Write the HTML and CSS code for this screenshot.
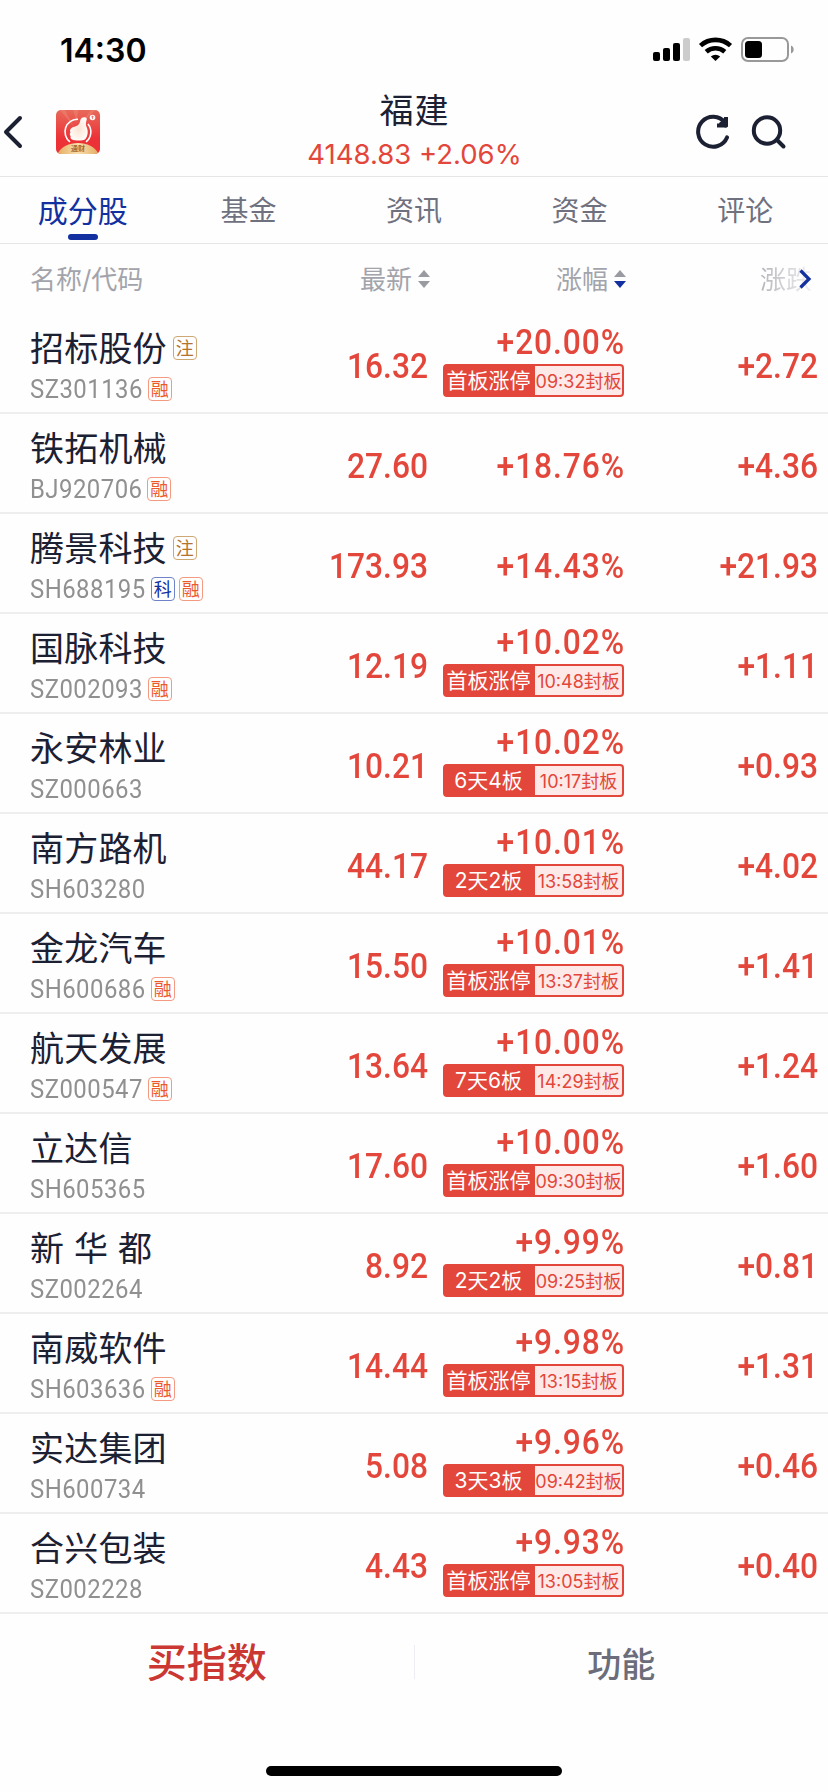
FILE: index.html
```html
<!DOCTYPE html>
<html lang="zh-CN">
<head>
  <meta charset="UTF-8">
  <meta name="viewport" content="width=device-width, initial-scale=1.0">
  <title>福建</title>
  <link rel="stylesheet" href="styles.css">
</head>
<body>
  <div class="status-bar">
    <span class="clock">14:30</span>
    <svg class="status-icons" width="144" height="28" viewBox="0 0 144 28">
      <rect x="1" y="16" width="7" height="9" rx="2"/>
      <rect x="11" y="12" width="7" height="13" rx="2"/>
      <rect x="21" y="7" width="7" height="18" rx="2"/>
      <rect x="31" y="2" width="7" height="23" rx="2" fill="#ccc"/>
      <g fill="none" stroke="#000" stroke-width="4.6">
        <path d="M48.5 9.6a22.5 22.5 0 0 1 30 0"/>
        <path d="M54.2 15.8a14 14 0 0 1 18.6 0"/>
      </g>
      <path d="M58.8 20.6a7.2 7.2 0 0 1 9.4 0L63.5 25z"/>
      <rect x="90" y="2" width="46" height="23" rx="6" fill="none" stroke="#999" stroke-width="2"/>
      <rect x="93" y="5" width="17" height="17" rx="3.5"/>
      <path d="M139 9.5c3.600 1.200 3.600 6.800 0 8z" fill="#999"/>
    </svg>
  </div>

  <header class="nav">
    <svg class="back" width="24" height="36" viewBox="0 0 24 36"><path d="M20 4L6 18l14 14"/></svg>
    <svg class="app-logo" width="44" height="44" viewBox="0 0 44 44">
      <defs>
        <clipPath id="logo-clip"><rect width="44" height="44" rx="5"/></clipPath>
        <linearGradient id="logo-bg" x1="0" y1="0" x2="0" y2="1">
          <stop offset="0" stop-color="#e8695a"/>
          <stop offset=".65" stop-color="#ec3236"/>
        </linearGradient>
        <radialGradient id="logo-hand">
          <stop offset="0" stop-color="#fbe3d3"/>
          <stop offset="1" stop-color="#fffaf6"/>
        </radialGradient>
        <linearGradient id="logo-gold">
          <stop offset="0" stop-color="#e3ac62"/>
          <stop offset=".5" stop-color="#f9dfac"/>
          <stop offset="1" stop-color="#e3ac62"/>
        </linearGradient>
      </defs>
      <g clip-path="url(#logo-clip)">
        <rect width="44" height="44" fill="url(#logo-bg)"/>
        <path d="M4 0l14 17L9 0zM17 0l4 12 1-12zM35 0l-9 12L40 0z" fill="#f29a80" opacity=".35"/>
        <path d="M22 9.300a12.500 12.500 0 0 0-8 22.500M32 14a12.500 12.500 0 0 1-2 17.800" fill="none" stroke="#fff" stroke-width="1.600"/>
        <path d="M15 18.500c1-1.800 6-1.500 8-4.500C25 11.500 23.500 8 27 7.400c3-.6 4.500.4 3.500 3.200-1 3-.8 4.800.3 7 1.700 4 1 8.500-1.300 11.400-2 2-11 1.800-13.500.5-1.800-1-1.600-2.300-1.300-3.500-1.200-1-1.100-2.600-.2-3.600-.8-1.200-.6-2.800.5-3.900z" fill="url(#logo-hand)"/>
        <circle cx="36.500" cy="7.500" r="2.800" fill="#fff"/>
        <path d="M36.500 9.200V6M35.200 7.200l1.300-1.300 1.300 1.300" fill="none" stroke="#e8695a" stroke-width=".8"/>
        <path d="M1 45C7 29 37 29 43 45z" fill="url(#logo-gold)"/>
        <text class="logo-text" x="22" y="41" text-anchor="middle">通财</text>
      </g>
    </svg>
    <div class="title">
      <h1>福建</h1>
      <p>4148.83 +2.06%</p>
    </div>
    <svg class="nav-icon" width="36" height="36" viewBox="0 0 36 36">
      <path d="M33 23.400A15 15 0 1 1 31 8.500"/>
      <path d="M32 3v8.500h-9" stroke-linecap="butt"/>
      <path d="M27 10l5-3.500v5z"/>
    </svg>
    <svg class="nav-icon search" width="36" height="36" viewBox="0 0 36 36">
      <circle cx="16" cy="16.500" r="13.200"/>
      <path d="M26 26l6.500 6.500"/>
    </svg>
  </header>

  <nav class="tabs">
    <a class="tab active">成分股</a>
    <a class="tab">基金</a>
    <a class="tab">资讯</a>
    <a class="tab">资金</a>
    <a class="tab">评论</a>
  </nav>

  <div class="thead">
    <span class="th-name">名称/代码</span>
    <span class="th">最新<i class="sort"></i></span>
    <span class="th">涨幅<i class="sort desc"></i></span>
    <span class="th-more"><span class="fade">涨跌</span><svg width="14" height="22" viewBox="0 0 14 22"><path d="M2.500 2.500L11 11l-8.500 8.500"/></svg></span>
  </div>

  <main class="stocks">
    <div class="row">
      <div class="stock"><div class="name">招标股份<b class="tag zhu">注</b></div><div class="code"><span>SZ301136</span><b class="tag rong">融</b></div></div>
      <div class="num">16.32</div>
      <div class="pct"><div class="num">+20.00%</div><div class="limit"><b>首板涨停</b><i>09:32封板</i></div></div>
      <div class="num">+2.72</div>
    </div>
    <div class="row">
      <div class="stock"><div class="name">铁拓机械</div><div class="code"><span>BJ920706</span><b class="tag rong">融</b></div></div>
      <div class="num">27.60</div>
      <div class="pct"><div class="num">+18.76%</div></div>
      <div class="num">+4.36</div>
    </div>
    <div class="row">
      <div class="stock"><div class="name">腾景科技<b class="tag zhu">注</b></div><div class="code"><span>SH688195</span><b class="tag ke">科</b><b class="tag rong">融</b></div></div>
      <div class="num">173.93</div>
      <div class="pct"><div class="num">+14.43%</div></div>
      <div class="num">+21.93</div>
    </div>
    <div class="row">
      <div class="stock"><div class="name">国脉科技</div><div class="code"><span>SZ002093</span><b class="tag rong">融</b></div></div>
      <div class="num">12.19</div>
      <div class="pct"><div class="num">+10.02%</div><div class="limit"><b>首板涨停</b><i>10:48封板</i></div></div>
      <div class="num">+1.11</div>
    </div>
    <div class="row">
      <div class="stock"><div class="name">永安林业</div><div class="code"><span>SZ000663</span></div></div>
      <div class="num">10.21</div>
      <div class="pct"><div class="num">+10.02%</div><div class="limit"><b>6天4板</b><i>10:17封板</i></div></div>
      <div class="num">+0.93</div>
    </div>
    <div class="row">
      <div class="stock"><div class="name">南方路机</div><div class="code"><span>SH603280</span></div></div>
      <div class="num">44.17</div>
      <div class="pct"><div class="num">+10.01%</div><div class="limit"><b>2天2板</b><i>13:58封板</i></div></div>
      <div class="num">+4.02</div>
    </div>
    <div class="row">
      <div class="stock"><div class="name">金龙汽车</div><div class="code"><span>SH600686</span><b class="tag rong">融</b></div></div>
      <div class="num">15.50</div>
      <div class="pct"><div class="num">+10.01%</div><div class="limit"><b>首板涨停</b><i>13:37封板</i></div></div>
      <div class="num">+1.41</div>
    </div>
    <div class="row">
      <div class="stock"><div class="name">航天发展</div><div class="code"><span>SZ000547</span><b class="tag rong">融</b></div></div>
      <div class="num">13.64</div>
      <div class="pct"><div class="num">+10.00%</div><div class="limit"><b>7天6板</b><i>14:29封板</i></div></div>
      <div class="num">+1.24</div>
    </div>
    <div class="row">
      <div class="stock"><div class="name">立达信</div><div class="code"><span>SH605365</span></div></div>
      <div class="num">17.60</div>
      <div class="pct"><div class="num">+10.00%</div><div class="limit"><b>首板涨停</b><i>09:30封板</i></div></div>
      <div class="num">+1.60</div>
    </div>
    <div class="row">
      <div class="stock"><div class="name">新 华 都</div><div class="code"><span>SZ002264</span></div></div>
      <div class="num">8.92</div>
      <div class="pct"><div class="num">+9.99%</div><div class="limit"><b>2天2板</b><i>09:25封板</i></div></div>
      <div class="num">+0.81</div>
    </div>
    <div class="row">
      <div class="stock"><div class="name">南威软件</div><div class="code"><span>SH603636</span><b class="tag rong">融</b></div></div>
      <div class="num">14.44</div>
      <div class="pct"><div class="num">+9.98%</div><div class="limit"><b>首板涨停</b><i>13:15封板</i></div></div>
      <div class="num">+1.31</div>
    </div>
    <div class="row">
      <div class="stock"><div class="name">实达集团</div><div class="code"><span>SH600734</span></div></div>
      <div class="num">5.08</div>
      <div class="pct"><div class="num">+9.96%</div><div class="limit"><b>3天3板</b><i>09:42封板</i></div></div>
      <div class="num">+0.46</div>
    </div>
    <div class="row">
      <div class="stock"><div class="name">合兴包装</div><div class="code"><span>SZ002228</span></div></div>
      <div class="num">4.43</div>
      <div class="pct"><div class="num">+9.93%</div><div class="limit"><b>首板涨停</b><i>13:05封板</i></div></div>
      <div class="num">+0.40</div>
    </div>
  </main>

  <footer class="bottom-bar">
    <a class="buy">买指数</a>
    <a class="more">功能</a>
  </footer>
  <div class="home-indicator"></div>
</body>
</html>
```
FILE: styles.css
```css
* {
  box-sizing: border-box;
}
body {
  margin: 0;
  width: 828px;
  height: 1792px;
  overflow: hidden;
  display: flex;
  flex-direction: column;
  background: #fefefe;
  color: #1c2033;
  font-family: Inter, "Noto Sans CJK SC", sans-serif;
}
h1, p {
  margin: 0;
}
b, i {
  font-weight: 400;
  font-style: normal;
}

/* status bar */
.status-bar {
  height: 88px;
  padding: 12px 32px 0 60px;
  display: flex;
  align-items: center;
  justify-content: space-between;
}
.clock {
  font-size: 32px;
  font-weight: 600;
  color: #000;
}

/* title bar */
.nav {
  height: 89px;
  padding: 0 41px 0 0;
  display: flex;
  align-items: center;
  border-bottom: 1px solid #e6e6e6;
}
.back, .nav-icon {
  fill: none;
  stroke: #1c2033;
  stroke-width: 4;
  stroke-linecap: round;
  stroke-linejoin: round;
}
.app-logo {
  margin-left: 32px;
}
.logo-text {
  font-size: 7px;
  font-weight: 700;
  fill: #a5692f;
}
.title {
  flex: 1;
  padding-left: 35px;
  text-align: center;
}
.title h1 {
  font-size: 34px;
  line-height: 44px;
  font-weight: 400;
  letter-spacing: 1px;
}
.title p {
  font-size: 27.5px;
  line-height: 42px;
  color: #e3463a;
}
.search {
  margin-left: 21px;
}

/* tabs */
.tabs {
  height: 67px;
  display: flex;
  border-bottom: 1px solid #e6e6e6;
}
.tab {
  flex: 1;
  display: flex;
  flex-direction: column;
  align-items: center;
  font-size: 28px;
  line-height: 68px;
  color: #6f717e;
}
.tab.active {
  font-size: 30px;
  color: #1230a0;
}
.tab.active::after {
  content: "";
  width: 30px;
  height: 6px;
  margin-top: -11px;
  border-radius: 3px;
  background: #1230a0;
}

/* table */
.thead, .row {
  display: grid;
  grid-template-columns: 248px 150px 196px 194px;
  padding-left: 30px;
  align-items: center;
}
.thead {
  height: 70px;
  padding-bottom: 3px;
  font-size: 26px;
  color: #a3a4ab;
}
.th {
  display: flex;
  align-items: center;
  justify-content: flex-end;
}
.thead .th {
  margin-right: -2px;
}
.sort {
  margin: 3px 0 0 6px;
  display: flex;
  flex-direction: column;
  gap: 4px;
}
.sort::before, .sort::after {
  content: "";
  border: 6px solid transparent;
  border-top-width: 0;
  border-bottom: 7px solid #9a9ba2;
}
.sort::after {
  border-top: 7px solid #9a9ba2;
  border-bottom-width: 0;
}
.sort.desc::after {
  border-top-color: #1230a0;
}
.th-more {
  display: flex;
  align-items: center;
  justify-content: flex-end;
  padding-right: 6px;
}
.fade {
  margin-right: -14px;
  background: linear-gradient(90deg, #b4b5bb, #d8d8dc 60%, #f2f2f4);
  -webkit-background-clip: text;
  background-clip: text;
  color: transparent;
}
.th-more svg {
  margin-top: 3px;
  fill: none;
  stroke: #1230a0;
  stroke-width: 3.2;
}
.row {
  height: 100px;
  border-bottom: 2px solid #eee;
}
.stock {
  padding-top: 5px;
}
.name {
  height: 44px;
  display: flex;
  align-items: center;
  font-size: 34px;
  letter-spacing: .2px;
  white-space: pre;
}
.code {
  height: 36px;
  margin-top: 2px;
  display: flex;
  align-items: center;
  font: 26px Roboto, sans-serif;
  color: #909090;
}
.code > span {
  transform: scaleX(.92);
  transform-origin: left;
  letter-spacing: .5px;
  margin-right: -5px;
}
.tag {
  width: 24px;
  height: 24px;
  border: 1px solid;
  border-radius: 4px;
  font: 18px/21px "Noto Sans CJK SC", sans-serif;
  letter-spacing: 0;
  text-align: center;
}
.tag + .tag {
  margin-left: 4px;
}
.zhu {
  margin: 2px 0 0 6px;
  border-color: #cda873;
  color: #b4732c;
}
.rong {
  border-color: #f39a80;
  color: #ec5a2c;
}
.ke {
  border-color: #6f84c8;
  color: #1230a0;
}
.num {
  font: 500 34.5px/40px Roboto, sans-serif;
  color: #e3463a;
  text-align: right;
  transform: scaleX(.92);
  transform-origin: right;
  padding-top: 6px;
}
.pct .num {
  padding-top: 5px;
  letter-spacing: 1px;
  margin-right: -1px;
}
/* price line sits higher when the limit badge is below it */
.pct:has(.limit) .num {
  padding-top: 0;
  margin-top: -8px;
}
.limit {
  width: 181px;
  height: 33px;
  margin: 2px 0 0 auto;
  display: flex;
  border: 2px solid #e3463a;
  border-radius: 4px;
  background: #fce9e8;
  color: #e3463a;
  text-align: center;
  white-space: nowrap;
}
.limit b {
  width: 90px;
  padding-right: 3px;
  background: #e3463a;
  color: #fff;
  font-size: 21px;
  line-height: 29px;
}
.limit i {
  flex: 1;
  font-size: 18px;
  line-height: 31px;
}

/* bottom */
.bottom-bar {
  height: 96px;
  display: flex;
  align-items: center;
  text-align: center;
}
.bottom-bar a {
  flex: 1;
}
.buy {
  padding-top: 2px;
  font-size: 40px;
  font-weight: 500;
  line-height: 32px;
  color: #cb3732;
  border-right: 1px solid #ededf3;
}
.more {
  font-size: 34px;
  font-weight: 500;
  color: #6b6d7a;
}
.home-indicator {
  width: 296px;
  height: 10px;
  margin: 56px auto 0;
  border-radius: 5px;
  background: #000;
}
```
